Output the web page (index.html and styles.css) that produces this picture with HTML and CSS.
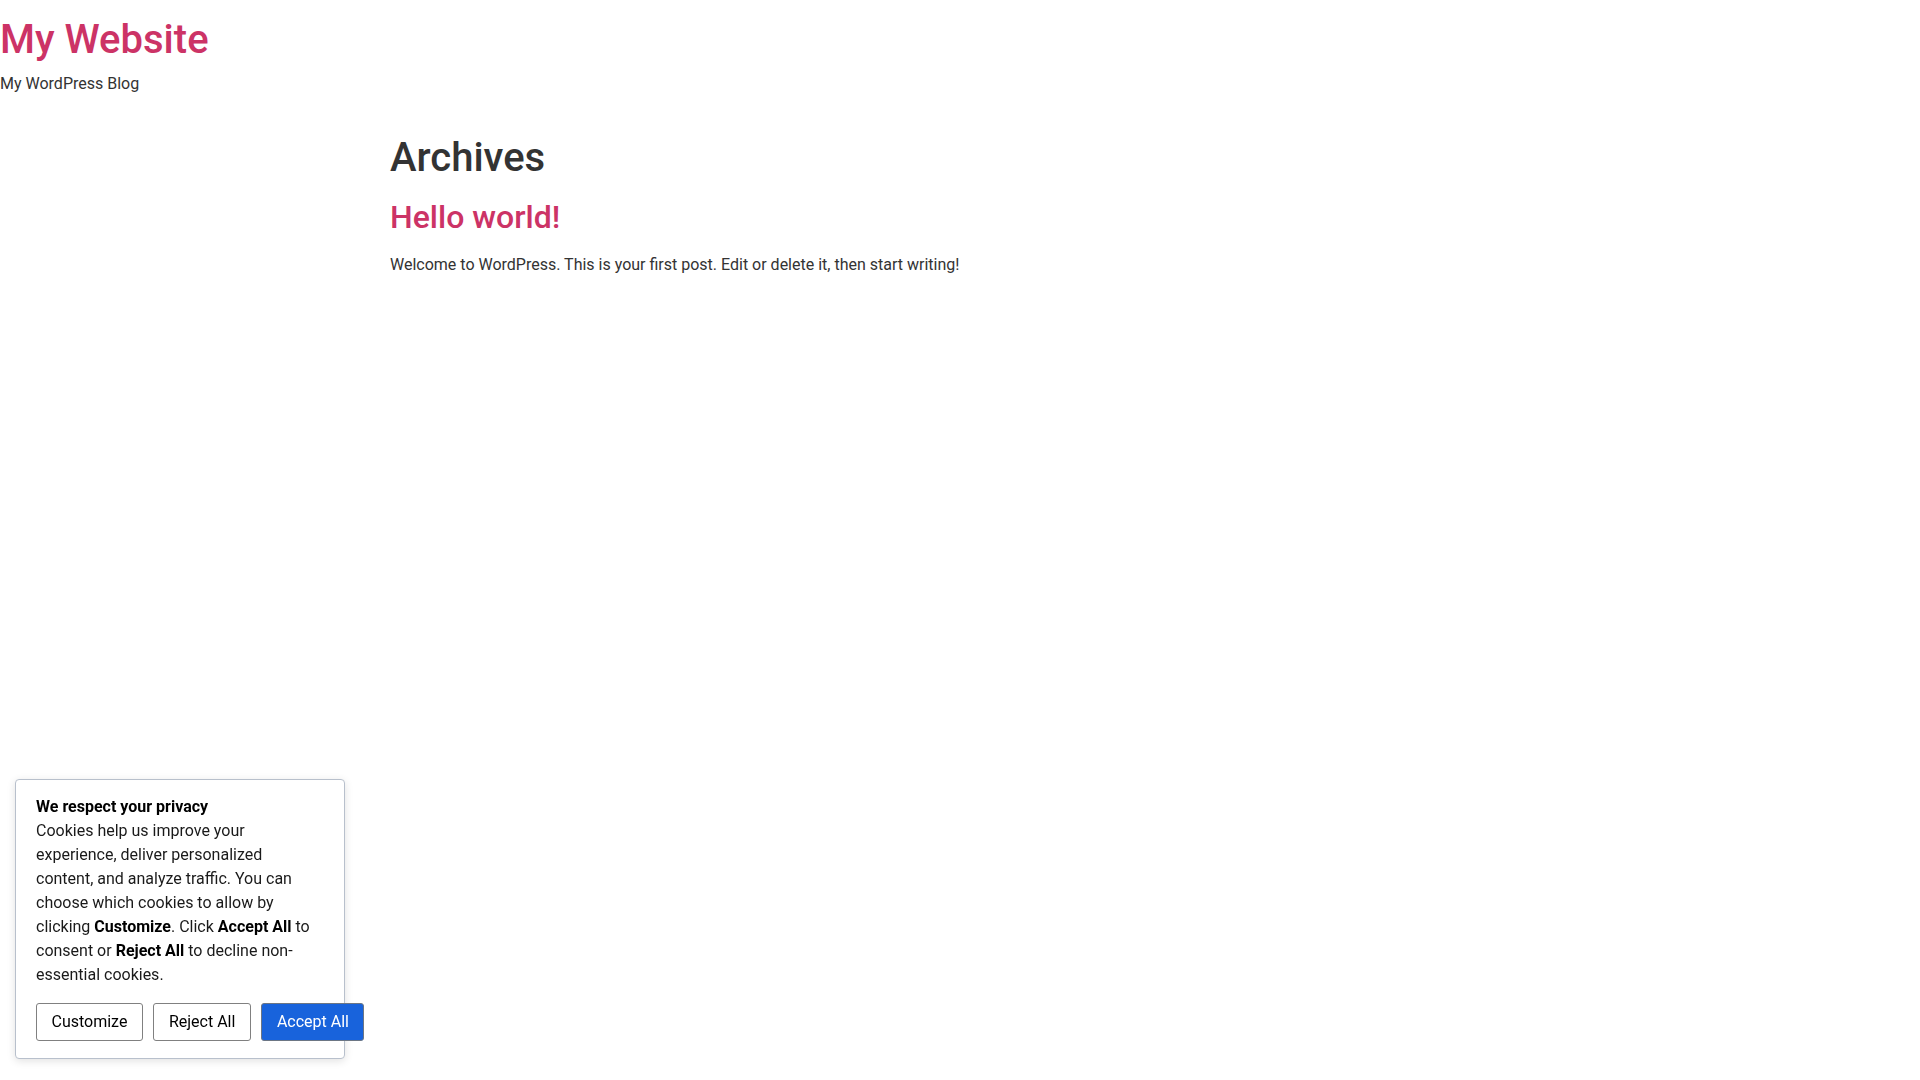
FILE: index.html
```html
<!DOCTYPE html>
<html lang="en">
<head>
<meta charset="utf-8">
<title>Archives – My Website</title>
<link rel="stylesheet" href="styles.css">
</head>
<body>
<header class="site-header">
  <h1 class="site-title"><a href="#">My Website</a></h1>
  <p class="site-description">My WordPress Blog</p>
</header>
<main class="site-main">
  <div class="page-header">
    <h1 class="entry-title">Archives</h1>
  </div>
  <div class="page-content">
    <article class="post">
      <h2 class="post-title"><a href="#">Hello world!</a></h2>
      <p class="excerpt">Welcome to WordPress. This is your first post. Edit or delete it, then start writing!</p>
    </article>
  </div>
</main>
<div class="cookie-banner">
  <p class="cookie-title">We respect your privacy</p>
  <p class="cookie-text">Cookies help us improve your experience, deliver personalized content, and analyze traffic. You can choose which cookies to allow by clicking <b>Customize</b>. Click <b>Accept All</b> to consent or <b>Reject All</b> to decline non-essential cookies.</p>
  <div class="cookie-buttons">
    <button class="btn">Customize</button>
    <button class="btn">Reject All</button>
    <button class="btn btn-accept">Accept All</button>
  </div>
</div>
</body>
</html>
```
FILE: styles.css
```css
html, body {
  margin: 0;
  padding: 0;
}
body {
  font-family: Roboto, "Liberation Sans", sans-serif;
  font-size: 16px;
  line-height: 1.5;
  color: #333;
  background: #fff;
}
a {
  color: #c36;
  text-decoration: none;
}
.site-header {
  padding-top: 16px;
}
.site-title {
  margin: 0 0 8px;
  font-size: 40px;
  font-weight: 500;
  line-height: 48px;
}
.site-description {
  margin: 0;
  line-height: 24px;
}
.site-main {
  max-width: 1140px;
  margin: 38px auto 0;
}
.entry-title {
  margin: 0;
  font-size: 40px;
  font-weight: 500;
  line-height: 48px;
  color: #333;
}
.post-title {
  margin: 16px 0 0;
  font-size: 32px;
  font-weight: 500;
  line-height: 38.4px;
}
.excerpt {
  margin: 17px 0 0;
  line-height: 24px;
}
.cookie-banner {
  position: fixed;
  left: 15px;
  bottom: 21px;
  width: 330px;
  box-sizing: border-box;
  padding: 15px 20px 17px;
  background: #fff;
  border: 1px solid #b8c0cc;
  border-radius: 4px;
  box-shadow: 0 2px 8px rgba(0, 0, 0, 0.12);
  color: #000;
}
.cookie-title {
  margin: 0;
  font-weight: 700;
  line-height: 24px;
}
.cookie-text {
  margin: 0;
  padding-right: 8px;
  line-height: 24px;
  color: #1a1a1a;
}
.cookie-text b {
  color: #000;
}
.cookie-buttons {
  display: flex;
  flex-wrap: nowrap;
  gap: 10.5px;
  margin-top: 16px;
}
.btn {
  flex: none;
  font-family: Roboto, "Liberation Sans", sans-serif;
  font-size: 16px;
  line-height: 20px;
  padding: 8px 14.5px;
  border: 1px solid #808080;
  border-radius: 3px;
  background: #fff;
  color: #000;
  white-space: nowrap;
}
.btn-accept {
  background: #1863dc;
  color: #fff;
  border-color: #6c7684;
}
```
